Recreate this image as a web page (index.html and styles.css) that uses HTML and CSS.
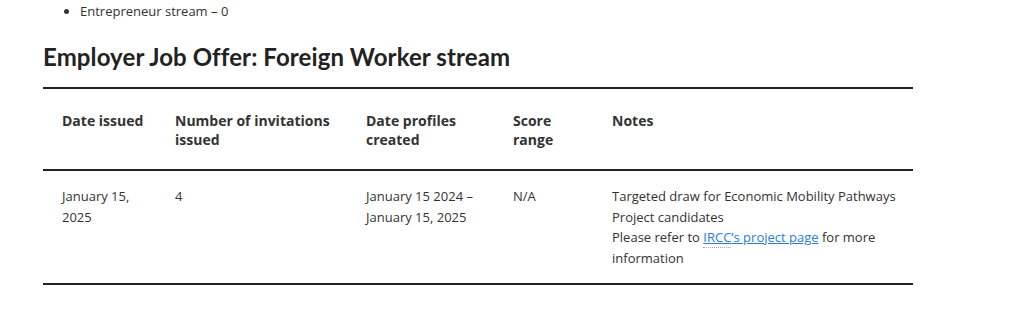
FILE: index.html
```html
<!DOCTYPE html>
<html lang="en">
<head>
<meta charset="utf-8">
<title>Employer Job Offer</title>
<link rel="stylesheet" href="styles.css">
</head>
<body>
<main class="content">
  <ul class="streams">
    <li>Entrepreneur stream – 0</li>
  </ul>
  <h2 class="title">Employer Job Offer: Foreign Worker stream</h2>
  <table class="draws">
    <thead>
      <tr>
        <th class="c1">Date issued</th>
        <th class="c2">Number of invitations issued</th>
        <th class="c3">Date profiles created</th>
        <th class="c4">Score range</th>
        <th class="c5">Notes</th>
      </tr>
    </thead>
    <tbody>
      <tr>
        <td>January 15, 2025</td>
        <td>4</td>
        <td>January 15 2024 – January 15, 2025</td>
        <td>N/A</td>
        <td>Targeted draw for Economic Mobility Pathways Project candidates<br>Please refer to <a href="#"><abbr class="abbr" title="Immigration, Refugees and Citizenship Canada">IRCC</abbr>’s project page</a> for more information</td>
      </tr>
    </tbody>
  </table>
</main>
</body>
</html>
```
FILE: styles.css
```css
html, body {
  margin: 0;
  padding: 0;
  background: #fff;
}
body {
  font-family: "Open Sans", "Liberation Sans", sans-serif;
  color: #333;
}
.content {
  padding: 0 0 0 43px;
  width: 870px;
}
.streams {
  margin: 0;
  padding: 2px 0 0 37px;
  font-size: 13px;
  line-height: 18px;
}
.title {
  margin: 22px 0 15px;
  font-family: "Lato", "Open Sans", sans-serif;
  font-weight: 700;
  font-size: 24px;
  line-height: 30px;
  color: #222;
  letter-spacing: 0.1px;
}
.draws {
  width: 870px;
  table-layout: fixed;
  border-collapse: collapse;
  border-top: 2px solid #222;
  border-bottom: 2px solid #222;
}
.draws th,
.draws td {
  box-sizing: border-box;
  text-align: left;
  vertical-align: top;
  padding-left: 19px;
  padding-right: 8px;
}
.draws th {
  font-size: 14px;
  font-weight: 700;
  line-height: 19px;
  padding-top: 22px;
  padding-bottom: 20px;
  border-bottom: 2px solid #222;
}
.draws td {
  font-size: 13px;
  line-height: 20.5px;
  padding-top: 15px;
  padding-bottom: 15px;
}
.c1 { width: 113px; }
.c2 { width: 191px; }
.c3 { width: 147px; }
.c4 { width: 99px; }
.draws a {
  color: #2b7bd3;
  text-decoration: underline;
}
.abbr {
  text-decoration: none;
  border-bottom: 1px dotted #aaa;
  padding-bottom: 1px;
}
```
